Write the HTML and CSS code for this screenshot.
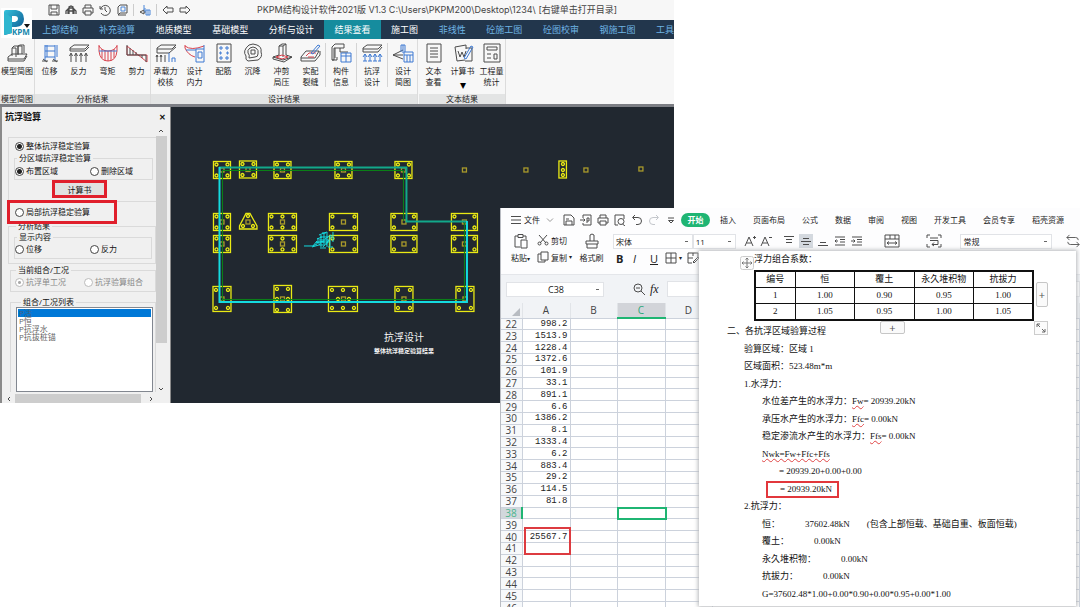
FILE: index.html
```html
<!DOCTYPE html>
<html lang="zh-CN">
<head>
<meta charset="utf-8">
<title>PKPM结构设计软件</title>
<link rel="stylesheet" href="styles.css">
</head>
<body>
<main class="desktop">

<section class="pkpm">
  <header class="pkpm-head">
    <svg class="logo" viewBox="0 0 32 32">
      <defs><linearGradient id="lg" x1="0" y1="0" x2="1" y2="1"><stop offset="0" stop-color="#35c3dc"/><stop offset="1" stop-color="#0b4f8c"/></linearGradient></defs>
      <rect x="1" y="1" width="31" height="30" fill="#fff"/>
      <path d="M4 5Q4 3 6 3H16Q24 4 24 12Q24 19 16 20H12V26L5 28Q4 28 4 26ZM12 9V15H15Q18 14 18 12Q18 9 15 9Z" fill="url(#lg)" fill-rule="evenodd"/>
      <path d="M4 5L12 11V26L4 28Z" fill="#2fb6cf"/>
      <text x="12" y="28" class="logo-text">KPM</text>
      <path d="M24 17h6l-3 4z" fill="#111"/>
    </svg>
    <div class="titlebar">
      <div class="quick">
        <svg viewBox="0 0 12 12"><path d="M1 1h10v10H1zM3 1v4h6V1M3 11V8h6v3"/></svg>
        <svg viewBox="0 0 12 12"><path d="M1 10V7l2-2v5M4 10V3l2-1 2 1v7M9 10V5l2 2v3M3 7h6M4 4h4" stroke-width="1.3"/></svg>
        <svg viewBox="0 0 12 12"><path d="M3 4V1h6v3M3 9H1V4h10v5H9M3 7h6v4H3z"/></svg>
        <svg viewBox="0 0 12 12"><path d="M1 2v3h3M1.500 5A5 5 0 1 1 2 9M6 3v3l2 2"/></svg>
        <svg viewBox="0 0 12 12"><path d="M2 10V3l2-2h7v8H4L2 11h8"/><path d="M5 3h4v4H5z" stroke="#4a86d8"/></svg>
        <i class="sep"></i>
        <svg viewBox="0 0 12 12"><path d="M1 8l4-2v4zM5 8h2" /><path d="M5 1v5M6 4v4M7 6h4v5H7zM9 6v5" stroke="#4a86d8"/></svg>
        <i class="sep"></i>
        <svg viewBox="0 0 12 12"><path d="M1 6l4-4v2h6v4H5v2z"/></svg>
        <svg viewBox="0 0 12 12"><path d="M11 6L7 2v2H1v4h6v2z"/></svg>
      </div>
      <h1>PKPM结构设计软件2021版 V1.3 C:\Users\PKPM200\Desktop\1234\ [右键单击打开目录]</h1>
    </div>
    <nav class="tabs">
      <button class="dim">上部结构</button><button class="dim">补充验算</button><button>地质模型</button><button>基础模型</button><button>分析与设计</button><button class="active">结果查看</button><button>施工图</button><button class="dim">非线性</button><button class="dim">砼施工图</button><button class="dim">砼图校审</button><button class="dim">钢施工图</button><button class="dim last">工具</button>
    </nav>
  </header>

  <div class="ribbon">
    <div class="group first"><div class="tools">
      <button><svg viewBox="0 0 24 20"><path d="M3 14l4-3h15l-3 5H3zM3 16v2h16l3-5M7 13V5h4v9M13 12V3h4v8M7 5l2-2h4v8M13 3l2-1h4v8"/></svg>模型简图</button>
    </div><div class="caption">模型简图</div></div>
    <div class="group"><div class="tools">
      <button><svg viewBox="0 0 24 20"><g class="b"><path d="M7 2v16M17 2v16M7 3h10M7 8h10M7 14h10M9 2v12M19 2v12"/></g><path d="M4 18h6M14 18h6M5 16l4 3M15 16l4 3"/></svg>位移</button>
      <button><svg viewBox="0 0 24 20"><path d="M3 5l4-3h15l-4 4H3zM3 6v2h15l4-4M4 19v-8M9 19v-8M14 19v-8M19 19v-8M2.500 13L4 10l1.500 3M7.500 13L9 10l1.500 3M12.500 13L14 10l1.500 3M17.500 13L19 10l1.500 3"/></svg>反力</button>
      <button><svg viewBox="0 0 24 20"><g class="r"><path d="M3 2v6Q4 18 12 18Q20 18 21 8V2M3 3Q6 8 12 8T21 3M6 6v9M9 7v11M12 8v10M15 7v11M18 6v9"/></g><path class="b" d="M3 8h18"/></svg>弯矩</button>
      <button><svg viewBox="0 0 24 20"><path d="M2 3l20 16v-7H2z" class="r"/><path d="M2 2v10h19v7M5 5v7M8 7v5M11 9v3M14 12v1M17 12v3"/></svg>剪力</button>
    </div><div class="caption">分析结果</div></div>
    <div class="group"><div class="tools">
      <button><svg viewBox="0 0 24 20"><path d="M3 5l4-3h15l-4 4H3zM3 6v4h12l7-6M3 19v-7M7 19v-7M11 19v-7M2 14l1-2 1 2M6 14l1-2 1 2"/><path class="b" d="M15 10v9M18 19v-4h3v4"/></svg>承载力<br>校核</button>
      <button><svg viewBox="0 0 24 20"><path class="r" d="M2 2v3Q5 12 12 14M2 3Q8 8 21 3"/><path class="b" d="M3 7h10M13 6h8v13h-8zM15 9h4v6h-4zM21 2v4"/></svg>设计<br>内力</button>
      <button><svg viewBox="0 0 24 20"><path d="M5 1h14v18H5z"/><path class="b" d="M8 4h2v2H8zM14 4h2v2h-2zM8 14h2v2H8zM14 14h2v2h-2zM8 9h1v2H8zM15 9h1v2h-1z"/></svg>配筋</button>
      <button><svg viewBox="0 0 24 20"><path d="M8 2Q12 0 16 2Q21 4 20 9Q22 14 17 17L7 18Q4 17 5 13Q1 8 8 2ZM9 5Q12 3 15 5Q18 7 17 11Q17 14 14 14L8 15Q9 12 7 10Q6 7 9 5ZM10 7h4v4h-4z"/></svg>沉降</button>
      <button><svg viewBox="0 0 24 20"><path d="M9 13V3l3-2h4v11M9 3h4v11M13 3l3-2M3 14l6-2M16 12l6 2-8 5-11-3v-2l10 3 9-3"/><path class="r" d="M6 14l6-2 6 2-6 2z"/></svg>冲剪<br>局压</button>
      <button><svg viewBox="0 0 24 20"><path d="M2 14l5-6h13l-4 7H2zM2 15v3h14l5-6V8"/><path class="r" d="M7 13l3-3h7M9 14h6"/><path class="b" d="M12 10l7-8 2 1-7 8z"/></svg>实配<br>裂缝</button>
      <button class="wide"><svg viewBox="0 0 24 20"><path d="M3 4l3-3h9v4H5v12H3zM6 5v10M11 5v4h8M3 17h5v-3"/><path class="b" d="M12 10h10v9H12zM12 13h10M17 10v9"/></svg>构件<br>信息</button>
      <button class="wide"><svg viewBox="0 0 24 20"><path d="M3 5l4-3h15l-4 4H3zM3 6v3h15l4-5"/><path class="b" d="M5 18v-7M10 18v-7M15 18v-7M20 18v-7M3 14l2-3 2 3M8 14l2-3 2 3M13 14l2-3 2 3M18 14l2-3 2 3M3 18h4M8 18h4M13 18h4M18 18h3"/></svg>抗浮<br>设计</button>
      <button class="wide"><svg viewBox="0 0 24 20"><path d="M12 7L2 12l10 4M2 12h10"/><path class="b" d="M10 9V2h4v7M12 2v8M13 9h9v10h-9zM13 12h9M16 12v7M19 12v7"/></svg>设计<br>简图</button>
    </div><div class="caption">设计结果</div></div>
    <div class="group"><div class="tools">
      <button><svg viewBox="0 0 24 20"><path d="M5 1h14v18H5zM8 5h8M8 8h8M8 11h8M8 14h8"/></svg>文本<br>查看</button>
      <button><svg viewBox="0 0 24 20"><path d="M4 4l11-2v4M4 4l2 14 8-1M15 5h6v13h-7M7 8l2 6 2-5 2 5 2-6" /><path class="b" d="M13 15l7-12 2 1-7 12z"/></svg>计算书<span class="arrow">▾</span></button>
      <button><svg viewBox="0 0 24 20"><path d="M4 1h16v18H4zM7 4h10v3H7zM7 11h4M7 15h4M14 11h3v5h-3z"/></svg>工程量<br>统计</button>
    </div><div class="caption">文本结果</div></div>
  </div>

  <div class="work">
    <aside class="panel">
      <h2>抗浮验算 <button aria-label="关闭">✕</button></h2>
      <div class="scroller">
        <form class="form">
          <div class="box main-box">
            <label><input type="radio" name="mode" checked>整体抗浮稳定验算</label>
            <fieldset><legend>分区域抗浮稳定验算</legend>
              <div class="pair"><label><input type="radio" name="area" checked>布置区域</label><label><input type="radio" name="area">删除区域</label></div>
            </fieldset>
            <div class="mark calc"><button type="button">计算书</button></div>
          </div>
          <div class="mark local"><label><input type="radio" name="mode">局部抗浮稳定验算</label></div>
          <fieldset class="results"><legend>分析结果</legend>
            <fieldset><legend>显示内容</legend>
              <div class="pair"><label><input type="radio" name="show">位移</label><label><input type="radio" name="show">反力</label></div>
            </fieldset>
          </fieldset>
          <fieldset class="combo"><legend>当前组合/工况</legend>
            <div class="pair off"><label><input type="radio" name="c" disabled checked>抗浮单工况</label><label><input type="radio" name="c" disabled>抗浮验算组合</label></div>
          </fieldset>
          <fieldset class="list"><legend>组合/工况列表</legend>
            <ul role="listbox"><li class="sel" role="option" aria-selected="true">P活</li><li role="option">P恒</li><li role="option">P抗浮水</li><li role="option">P抗拔桩锚</li></ul>
          </fieldset>
        </form>
        <div class="vbar"><svg viewBox="0 0 10 10"><path d="M3 6l2-2 2 2"/></svg><i></i><svg viewBox="0 0 10 10"><path d="M3 4l2 2 2-2"/></svg></div>
        <div class="hbar"><svg viewBox="0 0 10 10"><path d="M6 3L4 5l2 2"/></svg><i></i><svg viewBox="0 0 10 10"><path d="M4 3l2 2-2 2"/></svg></div>
      </div>
    </aside>
    <svg class="cad" viewBox="171 107 503 296" preserveAspectRatio="xMinYMin meet">
      <defs>
        <g id="c"><circle r="1.500"/></g>
        <g id="k"><rect x="-2" y="-2" width="4" height="4" class="core"/></g>
        <g id="s"><rect x="-8.500" y="-8.500" width="17" height="17"/><use href="#c" x="-5.500" y="-5.500"/><use href="#c" x="5.500" y="-5.500"/><use href="#c" x="-5.500" y="5.500"/><use href="#c" x="5.500" y="5.500"/><use href="#k"/></g>
        <g id="m"><rect x="-13" y="-8.500" width="26" height="17"/><use href="#c" x="-10" y="-5.500"/><use href="#c" x="10" y="-5.500"/><use href="#c" x="-10" y="5.500"/><use href="#c" x="10" y="5.500"/><use href="#k"/></g>
        <g id="w"><rect x="-14" y="-8.500" width="28" height="17"/><use href="#c" x="-11" y="-5.500"/><use href="#c" x="11" y="-5.500"/><use href="#c" x="-11" y="5.500"/><use href="#c" x="11" y="5.500"/><use href="#k"/></g>
        <g id="v"><rect x="-9" y="-12.500" width="18" height="25"/><use href="#c" x="-6" y="-9"/><use href="#c" x="6" y="-9"/><use href="#c" x="-6" y="9"/><use href="#c" x="6" y="9"/><use href="#k"/></g>
      </defs>
      <g class="piles">
        <use href="#s" x="222" y="170"/><use href="#s" x="248" y="169.500"/><use href="#s" x="282.500" y="170"/><use href="#s" x="343.500" y="170"/><use href="#s" x="403.500" y="170"/>
        <use href="#s" x="222" y="222"/><use href="#w" x="282.500" y="222"/><use href="#c" x="282.500" y="216.500"/><use href="#c" x="282.500" y="227.500"/><use href="#w" x="343.500" y="222"/><use href="#m" x="404" y="222"/><use href="#m" x="464.500" y="222"/>
        <path d="M246 213.500h4L257 226v3h-17.500v-3z"/><use href="#c" x="248" y="216"/><use href="#c" x="243" y="226"/><use href="#c" x="253" y="226"/><use href="#k" x="248" y="222"/>
        <use href="#s" x="222" y="244"/><use href="#w" x="282.500" y="244"/><use href="#c" x="282.500" y="238.500"/><use href="#c" x="282.500" y="249.500"/><use href="#w" x="343.500" y="244"/><use href="#m" x="404" y="244"/><use href="#m" x="464.500" y="244"/>
        <use href="#v" x="222" y="299"/><rect x="274" y="285.500" width="17.500" height="27"/><use href="#c" x="277" y="289"/><use href="#c" x="288" y="289"/><use href="#c" x="277" y="299"/><use href="#c" x="288" y="299"/><use href="#c" x="277" y="310"/><use href="#c" x="288" y="310"/><use href="#k" x="282.500" y="299"/>
        <rect x="328.500" y="286.500" width="29" height="25"/><use href="#c" x="332" y="290"/><use href="#c" x="343" y="290"/><use href="#c" x="354" y="290"/><use href="#c" x="338" y="299"/><use href="#c" x="349" y="299"/><use href="#c" x="332" y="308"/><use href="#c" x="343" y="308"/><use href="#c" x="354" y="308"/><use href="#k" x="343.500" y="299"/>
        <use href="#v" x="404" y="299"/><use href="#v" x="465" y="299"/>
        <use href="#k" x="464.500" y="170"/><use href="#k" x="526" y="170"/><use href="#k" x="586" y="170"/><use href="#k" x="641" y="169"/>
        <rect x="559" y="161" width="7.500" height="17"/><use href="#c" x="563" y="164"/><use href="#c" x="563" y="170"/><use href="#c" x="563" y="175"/>
      </g>
      <path class="green" d="M222.500 302V170.500H403.500V221M464.500 222V299.500H222"/>
      <path class="teal" d="M219 167.500H406.500V221.500H467"/>
      <path class="cyan" d="M219.500 167V302H467V221"/>
      <path class="cyan scribble" d="M304 246h9l4-2M312 247l7-2 3-4M316 243l8-2M317 239l5-2M319 235l8-3M320 237h8M322 233h6M325 239l6-4M316 242h8M319 245h6M322 242h7M326 245l3-5M330 237v9M333 232v10M328 247h5M331 235v3M320 248h6M313 246l4-5M318 238v6M321 235v12M324 233v11M327 234v13M319 240h10M323 247l6-7"/>
      <text x="404" y="341" class="cad-title">抗浮设计</text>
      <text x="404" y="353" class="cad-sub">整体抗浮稳定验算结果</text>
    </svg>
  </div>
</section>

<section class="sheet">
  <nav class="menu">
    <button class="file"><svg viewBox="0 0 12 12"><path d="M1 2.500h10M1 6h10M1 9.500h10"/></svg>文件<svg class="chev" viewBox="0 0 12 12"><path d="M3 4.500l3 3 3-3"/></svg></button>
    <div class="icons">
      <svg viewBox="0 0 12 12"><path d="M1 1h7l3 3v7H1zM3 11V7h6v4M3 5h3"/></svg>
      <svg viewBox="0 0 12 12"><path d="M3 4V1h8v10H3V9M0 6h5M3.500 4.500L5 6 3.500 7.500M7 9V4h2v3H7"/></svg>
      <svg viewBox="0 0 12 12"><path d="M3 4V1h6v3M3 9H1V4h10v5H9M3 7h6v4H3z"/></svg>
      <svg viewBox="0 0 12 12"><path d="M4 11H1V1h9v4M8.500 10L11 12"/><circle cx="7" cy="7.500" r="3"/></svg>
      <svg viewBox="0 0 12 12"><path d="M4 1L1.500 3.500 4 6M2 3.500h5a3.500 3.500 0 0 1 0 7H5"/></svg>
      <svg viewBox="0 0 12 12" class="faint"><path d="M8 1l2.500 2.500L8 6M10 3.500H5a3.500 3.500 0 0 0 0 7h2"/></svg>
      <svg viewBox="0 0 12 12"><path d="M3 4h6M3.500 6.500h5L6 9z"/></svg>
    </div>
    <div class="menu-tabs"><button class="on">开始</button><button>插入</button><button>页面布局</button><button>公式</button><button>数据</button><button>审阅</button><button>视图</button><button>开发工具</button><button>会员专享</button><button>稻壳资源</button></div>
  </nav>
  <div class="toolbar">
    <button class="big"><svg viewBox="0 0 16 16"><path d="M5 3H2v11h5M10 3h3v3M5 1.500h5v3H5zM8 7h6v8H8z"/></svg><span>粘贴<small>▾</small></span></button>
    <div class="stack">
      <button><svg viewBox="0 0 12 12"><path d="M2 1l7 8M10 1L3 9"/><circle cx="2.500" cy="9.500" r="1.500"/><circle cx="9.500" cy="9.500" r="1.500"/></svg>剪切</button>
      <button><svg viewBox="0 0 12 12"><path d="M4 1h7v8H4zM4 3H1v8h7V9"/></svg>复制<small>▾</small></button>
    </div>
    <button class="big"><svg viewBox="0 0 16 16"><path d="M6 8V2q2-2 4 0v6M2 8h12v3H2zM3 11v4h10v-4"/></svg><span>格式刷</span></button>
    <div class="stack font">
      <div class="line">
        <select class="face" aria-label="字体"><option>宋体</option></select><select class="size" aria-label="字号"><option>11</option></select>
        <div class="aa"><svg viewBox="0 0 12 12"><path d="M1 11L5 2l4 9M2.500 8h5M9 2.500h3M10.500 1v3"/></svg><svg viewBox="0 0 12 12"><path d="M1 11L5 2l4 9M2.500 8h5M9 2.500h3"/></svg></div>
        <div class="align">
          <svg viewBox="0 0 12 12"><path d="M1 1.500h10M3 4.500h6M3 7.500h6"/></svg>
          <svg class="pressed" viewBox="0 0 12 12"><path d="M3 3.500h6M1 6.500h10M3 9.500h6"/></svg>
          <svg viewBox="0 0 12 12"><path d="M3 7.500h6M1 10.500h10"/></svg>
          <svg viewBox="0 0 12 12"><path d="M1 2h10M6 4.500h5M6 7h5M1 10h10M4 6H1M2.500 4.500L1 6l1.500 1.500"/></svg>
          <svg viewBox="0 0 12 12"><path d="M1 2h10M6 4.500h5M6 7h5M1 10h10M0 6h3.500M2.500 4.500L4 6 2.500 7.500"/></svg>
        </div>
        <svg class="ic" viewBox="0 0 16 16"><path d="M1 2h14v12H1zM1 6h14M6 2v4M11 2v4M3 10h10M5 8.500L3 10l2 1.500M11 8.500l2 1.500-2 1.500"/></svg>
        <svg class="ic wrap" viewBox="0 0 16 16"><path d="M4 2H1v3M12 2h3v3M1 11v3h3M15 11v3h-3M4 5h8M4 7.500h8v4H6M8 9.500l-2 2L8 13"/></svg>
        <select class="fmt" aria-label="数字格式"><option>常规</option></select>
        <svg class="ic loop" viewBox="0 0 16 16"><path d="M4 1L1 4l3 3M1 4h10q3 0 3 3M12 9l3 3-3 3M15 12H5q-3 0-3-3"/></svg>
      </div>
      <div class="line fmtline">
        <button><b>B</b></button><button><i>I</i></button><button><u>U</u></button>
        <button class="borders"><svg viewBox="0 0 12 12"><path d="M1 1h10v10H1zM6 1v10M1 6h10"/></svg><small>▾</small></button>
        <svg viewBox="0 0 12 12"><path d="M11 5V1H1v10h4M1 6h5M6 1v3M6 10l5-5 1 1-5 5z"/></svg>
      </div>
    </div>
  </div>
  <div class="formula">
    <select aria-label="名称框"><option>C38</option></select>
    <svg viewBox="0 0 12 12"><circle cx="5" cy="5" r="4"/><path d="M8 8l4 4M3 5h4"/></svg>
    <span class="fx">fx</span>
    <input type="text" aria-label="编辑栏">
  </div>
  <div class="grid">
    <table>
      <colgroup><col class="c0"><col class="c48"><col class="c47"><col class="c48"><col class="c47"><col></colgroup>
      <thead><tr><th><svg viewBox="0 0 8 8"><path d="M8 0v8H0z"/></svg></th><th>A</th><th>B</th><th class="hot">C</th><th>D</th><th></th></tr></thead>
      <tbody>
        <tr><th>22</th><td>998.2</td><td></td><td></td><td></td><td></td></tr>
        <tr><th>23</th><td>1513.9</td><td></td><td></td><td></td><td></td></tr>
        <tr><th>24</th><td>1228.4</td><td></td><td></td><td></td><td></td></tr>
        <tr><th>25</th><td>1372.6</td><td></td><td></td><td></td><td></td></tr>
        <tr><th>26</th><td>101.9</td><td></td><td></td><td></td><td></td></tr>
        <tr><th>27</th><td>33.1</td><td></td><td></td><td></td><td></td></tr>
        <tr><th>28</th><td>891.1</td><td></td><td></td><td></td><td></td></tr>
        <tr><th>29</th><td>6.6</td><td></td><td></td><td></td><td></td></tr>
        <tr><th>30</th><td>1386.2</td><td></td><td></td><td></td><td></td></tr>
        <tr><th>31</th><td>8.1</td><td></td><td></td><td></td><td></td></tr>
        <tr><th>32</th><td>1333.4</td><td></td><td></td><td></td><td></td></tr>
        <tr><th>33</th><td>6.2</td><td></td><td></td><td></td><td></td></tr>
        <tr><th>34</th><td>883.4</td><td></td><td></td><td></td><td></td></tr>
        <tr><th>35</th><td>29.2</td><td></td><td></td><td></td><td></td></tr>
        <tr><th>36</th><td>114.5</td><td></td><td></td><td></td><td></td></tr>
        <tr><th>37</th><td>81.8</td><td></td><td></td><td></td><td></td></tr>
        <tr><th class="hotrow">38</th><td></td><td></td><td class="cursor"></td><td></td><td></td></tr>
        <tr><th>39</th><td></td><td></td><td></td><td></td><td></td></tr>
        <tr><th>40</th><td class="total">25567.7</td><td></td><td></td><td></td><td></td></tr>
        <tr><th>41</th><td></td><td></td><td></td><td></td><td></td></tr>
        <tr><th>42</th><td></td><td></td><td></td><td></td><td></td></tr>
        <tr><th>43</th><td></td><td></td><td></td><td></td><td></td></tr>
        <tr><th>44</th><td></td><td></td><td></td><td></td><td></td></tr>
        <tr><th>45</th><td></td><td></td><td></td><td></td><td></td></tr>
        <tr><th>46</th><td></td><td></td><td></td><td></td><td></td></tr>
      </tbody>
    </table>
  </div>

  <article class="doc">
    <div class="lead"><svg viewBox="0 0 14 14"><rect x=".5" y=".5" width="13" height="13" rx="2"/><path d="M7 2v10M2 7h10M5.500 3.500L7 2l1.500 1.500M5.500 10.500L7 12l1.500-1.500M3.500 5.500L2 7l1.500 1.500M10.500 5.500L12 7l-1.500 1.500"/></svg><span>浮力组合系数：</span></div>
    <div class="table-wrap">
      <table>
        <colgroup><col class="c40"><col><col><col><col></colgroup>
        <tr><th>编号</th><th>恒</th><th>覆土</th><th>永久堆积物</th><th>抗拔力</th></tr>
        <tr><td>1</td><td>1.00</td><td>0.90</td><td>0.95</td><td>1.00</td></tr>
        <tr><td>2</td><td>1.05</td><td>0.95</td><td>1.00</td><td>1.05</td></tr>
      </table>
      <button class="add-col">+</button>
      <button class="add-row">+</button>
      <svg class="expand" viewBox="0 0 14 14"><rect x=".5" y=".5" width="13" height="13"/><path d="M3 6V3h3M3 3l3 3M11 8v3H8M11 11L8 8"/></svg>
    </div>
    <div class="text">
      <p>二、各抗浮区域验算过程</p>
      <p class="i1">验算区域：区域 1</p>
      <p class="i1">区域面积：523.48m*m</p>
      <p class="i1">1.水浮力：</p>
      <p class="i2">水位差产生的水浮力：<u>Fw</u>= 20939.20kN</p>
      <p class="i2">承压水产生的水浮力：<u>Ffc</u>= 0.00kN</p>
      <p class="i2">稳定渗流水产生的水浮力：<u>Ffs</u>= 0.00kN</p>
      <p class="i2"><u>Nwk=Fw+Ffc+Ffs</u></p>
      <p class="i3">= 20939.20+0.00+0.00</p>
      <p class="i2"><span class="boxed">= 20939.20kN</span></p>
      <p class="i1">2.抗浮力：</p>
      <p class="i2 cols"><span>恒：</span><span>37602.48kN</span><span class="note">(包含上部恒载、基础自重、板面恒载)</span></p>
      <p class="i2 cols"><span>覆土：</span><span>0.00kN</span></p>
      <p class="i2 cols"><span>永久堆积物：</span><span>0.00kN</span></p>
      <p class="i2 cols"><span>抗拔力：</span><span>0.00kN</span></p>
      <p class="i2">G=37602.48*1.00+0.00*0.90+0.00*0.95+0.00*1.00</p>
    </div>
  </article>
</section>
</main>
</body>
</html>
```
FILE: styles.css
```css
* { box-sizing: border-box; }
body { margin: 0; background: #fff; color: #222; font: 8px/11px "Open Sans", "Noto Sans CJK SC", sans-serif; }
button, input, select { font: inherit; color: inherit; border: 0; padding: 0; margin: 0; background: none; }
svg { fill: none; stroke: #4c4c4c; stroke-width: 1; display: block; flex: none; }
h1, h2, p, ul { margin: 0; padding: 0; font-weight: normal; }
.desktop { position: relative; min-height: 100vh; overflow: hidden; }

/* PKPM window */
.pkpm { width: 62.4%; background: #f7f7f7; }
.pkpm-head { display: grid; grid-template-columns: 32px minmax(0, 1fr); grid-template-rows: 20px 19px; }
.logo { grid-row: 1 / 3; width: 32px; height: 32px; margin-top: 7px; stroke: none; }
.logo-text { font: bold 8px "Open Sans", sans-serif; fill: #1687ad; }
.titlebar { display: flex; align-items: center; padding-left: 16px; gap: 66px; }
.quick { display: flex; align-items: center; gap: 5px; }
.quick svg { width: 12px; height: 12px; }
.quick .sep { width: 1px; height: 12px; background: #ccc; }
.titlebar h1 { font: 9px/20px Inter, "Noto Sans CJK SC", sans-serif; white-space: nowrap; color: #444; }
.tabs { display: flex; background: #22364c; overflow: hidden; }
.tabs button { flex: 1 0 auto; padding: 0 10px; font-size: 9px; color: #fff; white-space: nowrap; }
.tabs .dim { color: #6fb4e4; }
.tabs .active { background: #168c9e; }
.tabs .last { flex: none; padding-right: 0; }

.ribbon { display: flex; border-bottom: 3px solid #7c7e84; }
.group { border-right: 1px solid #dcdcdc; }
.tools { display: flex; height: 55px; padding-top: 4px; }
.tools button { width: 29px; display: block; text-align: center; line-height: 11px; white-space: nowrap; align-self: start; }
.first .tools button { width: 34px; }
.group:nth-child(4) { margin-left: 1px; }
.tools .wide { width: 31px; border-left: 1px solid #d4d4d4; }
.tools svg { width: 24px; height: 20px; margin: 0 auto 2px; }
.tools .b { stroke: #3d79d2; }
.tools .r { stroke: #d8434e; }
.arrow { display: block; font-size: 12px; line-height: 18px; color: #000; }
.caption { background: #e3e4e4; text-align: center; line-height: 10px; height: 10px; }
.group:nth-child(2) .tools, .group:nth-child(3) .tools, .group:nth-child(4) .tools { margin-right: -1px; }

.work { display: grid; grid-template-columns: 171px minmax(0, 1fr); }
.panel { background: #f0f0f0; border-left: 2px solid #8a8a8a; border-right: 1px solid #8a8a8a; color: #111; }
.panel h2 { display: flex; justify-content: space-between; padding: 0 3px; font-size: 9px; line-height: 19px; font-weight: bold; }
.panel h2 button { font-size: 8px; width: 9px; }
.scroller { display: grid; grid-template-columns: 154px 11px; grid-template-rows: 268px 9px; }
.form { padding: 11px 0 0 6px; line-height: 10px; }
.form fieldset { border: 1px solid #dadada; margin: 0; padding: 0; min-width: 0; }
.form legend { padding: 0 2px; margin-left: 2px; line-height: 10px; }
.form label { display: flex; align-items: center; gap: 2px; height: 10px; white-space: nowrap; }
.form input { appearance: none; width: 9px; height: 9px; border: 1px solid #444; border-radius: 50%; background: #fff; }
.form input:checked { background: radial-gradient(#222 0 2px, #fff 3px); }
.form input:disabled { border-color: #bbb; }
.form input:disabled:checked { background: radial-gradient(#aaa 0 1px, #fff 2px); }
.pair { display: grid; grid-template-columns: 75px 1fr; }
.off { color: #888; grid-template-columns: 69px 1fr; }
.box { border: 1px solid #dadada; border-right: 0; height: 65px; padding: 3px 3px 0 6px; }
.box fieldset, .results fieldset { height: 27px; }
.box fieldset { margin: 2px 0 0 -1px; }
.box .pair { padding-top: 3px; }
.mark { border: 3px solid #e01f2c; }
.calc { width: 55px; height: 18px; margin: 0 0 0 37px; }
.calc button { display: block; width: 100%; height: 12px; padding-top: 2px; line-height: 10px; background: #e1e1e1; }
.local { position: relative; width: 110px; height: 24px; margin: -2px 0 0 -1px; padding: 4px 0 0 5px; }
.form .results { height: 43px; margin-top: -3px; padding: 1px 3px 0 5px; }
.results .pair { padding-top: 2px; }
.form .combo { height: 27px; margin: 1px 0 0 2px; }
.combo legend, .list legend { margin-left: 5px; }
.combo .pair { padding: 2px 0 0 4px; }
.form .list { margin: 5px 0 0 2px; border-bottom: 0; padding: 0 2px 0 5px; }
.list ul { list-style: none; height: 85px; border: 1px solid #828790; background: #fff; color: #666; line-height: 8px; padding: 1px; }
.list li { padding: 0 1px; height: 8px; }
.list .sel { background: #0078d7; color: #47627c; }
.vbar { grid-row: 1 / 3; grid-column: 2; display: flex; flex-direction: column; }
.vbar i { height: 207px; background: #cdcdcd; margin-bottom: 41px; }
.vbar svg, .hbar svg { width: 10px; height: 10px; }
.hbar { display: flex; align-items: center; grid-row: 2; grid-column: 1; padding-left: 2px; height: 9px; }
.hbar i { width: 126px; height: 9px; background: #cdcdcd; margin: 0 5px 0 1px; }

.cad { width: 100%; height: 100%; background: #212830; }
.piles { stroke: #eaea14; stroke-width: 1.3; }
.core { stroke: #a99a2b; }
.green { stroke: #0b8217; }
.teal { stroke: #12a88a; stroke-width: 2; }
.cyan { stroke: #14dbe0; stroke-width: 2; }
.scribble { stroke-width: 1; }
.cad-title, .cad-sub { fill: #f4f4f4; stroke: none; text-anchor: middle; font-family: "Noto Sans CJK SC", sans-serif; font-size: 10px; }
.cad-sub { font-size: 6px; font-weight: bold; }

/* Spreadsheet window */
.sheet { position: absolute; left: 500px; right: 0; top: 208px; bottom: 0; background: #fdfdfe; border-left: 1px solid #b9bcc2; display: flex; flex-direction: column; overflow: hidden; }
.sheet small { font-size: 6px; }
.menu { display: flex; align-items: center; height: 23px; padding-left: 9px; }
.file { display: flex; align-items: center; gap: 2px; width: 53px; }
.menu svg, .stack svg { width: 12px; height: 12px; }
.file .chev { stroke: #999; margin-left: 2px; }
.icons { display: flex; gap: 5px; width: 118px; }
.icons svg { width: 12px; }
.icons .faint { stroke: #c4c7cc; }
.menu-tabs { display: flex; align-items: center; gap: 17px; white-space: nowrap; }
.menu-tabs .on { width: 29px; height: 14px; border-radius: 7px; background: #1fb573; color: #fff; font-weight: bold; margin-right: -7px; }
.toolbar { display: flex; height: 44px; padding-left: 8px; border-bottom: 1px solid #e4e6ea; }
.big { width: 23px; height: 36px; margin-top: 2px; display: flex; flex-direction: column; align-items: center; gap: 3px; white-space: nowrap; }
.big svg { width: 16px; height: 16px; }
.stack { display: flex; flex-direction: column; gap: 5px; margin: 3px 4px 0 5px; }
.stack button { display: flex; align-items: center; gap: 2px; height: 12px; }
.stack:nth-child(2) { width: 39px; }
.font { flex: 1; margin: 2px 0 0 10px; min-width: 0; gap: 3px; }
.line { display: flex; align-items: center; height: 16px; }
.line select, .formula select { appearance: none; background: linear-gradient(#666, #666) right 4px center / 3px 1px no-repeat #fff; border: 1px solid #e1e3e7; height: 15px; padding-left: 2px; }
.line .face { width: 80px; }
.line .size { width: 44px; }
.line .fmt { width: 92px; margin-left: 18px; }
.aa { display: flex; gap: 4px; margin: 0 11px 0 8px; }
.align { display: flex; gap: 5px; }
.align .pressed { background: #d4d9df; outline: 1px solid #d4d9df; }
.ic.ic { width: 16px; height: 16px; margin-left: 21px; }
.ic.wrap { margin-left: 26px; }
.ic.loop { margin-left: 14px; width: 14px; }
.fmtline { gap: 9px; padding-left: 3px; font-size: 11px; height: 12px; }
.fmtline button { min-width: 8px; }
.fmtline .borders { margin: 0 -4px 0 -2px; }
.formula { display: flex; align-items: center; height: 28px; background: #f1f3f6; padding-left: 5px; }
.formula select { width: 98px; background-color: #fff; text-align: center; text-align-last: center; font-size: 9px; }
.formula svg { width: 12px; height: 12px; margin-left: 29px; }
.fx { font: italic 12px "Liberation Serif", serif; margin: 0 5px; width: 12px; }
.formula input { flex: 1; height: 16px; background: #fff; border: 1px solid #e1e3e7; min-width: 0; }
.grid { flex: 1; min-height: 0; overflow: hidden; }
.grid table { width: 100%; height: 311px; table-layout: fixed; border-collapse: collapse; background: #fff; }
.grid th, .grid td { padding: 0; border: 1px solid #ccd2dc; border-width: 0 1px 1px 0; line-height: 10px; }
.grid tbody th { font: 10px/10px "Open Sans", sans-serif; color: #444; background: #f7f9fb; }
.grid thead th { height: 15px; background: #f1f3f6; font: 10px/14px "Open Sans", sans-serif; color: #444; border-right-color: #e1e4e8; }
.grid thead .hot { background: #d2d4d9; color: #2ba77a; border-bottom: 2px solid #1fb573; }
.grid tbody .hotrow { background: #d2d8dc; color: #4ab58d; border-right: 2px solid #1fb573; }
.grid td { font-family: "Liberation Mono", monospace; font-size: 9px; text-align: right; padding-right: 2px; position: relative; }
.grid th svg { width: 8px; height: 8px; fill: #b8bcc2; stroke: none; margin: 3px 0 0 11px; }
.c0 { width: 21px; } .c48 { width: 48px; } .c47 { width: 47px; }
.cursor::after { content: ""; position: absolute; inset: -1px -2px -2px -1px; border: 2px solid #1fb573; }
.total::after { content: ""; position: absolute; inset: -4px -1px -13px 1px; border: 2px solid #dd3b40; }

/* Document window */
.doc { position: absolute; left: 198px; right: 4px; top: 43px; bottom: 1px; background: #fff; box-shadow: 0 0 4px 1px #b5b7ba; display: flex; flex-direction: column; font: 9px/16px "Liberation Serif", "Noto Sans CJK SC", serif; color: #111; }
.lead { display: flex; align-items: start; height: 19px; padding-left: 41px; }
.lead svg { width: 14px; height: 14px; margin-top: 5px; stroke: #777; }
.lead rect, .expand rect { stroke: #ccc; fill: #fbfbfb; }
.table-wrap { position: relative; margin: 0 42px 0 55px; }
.table-wrap table { width: 100%; table-layout: fixed; border-collapse: collapse; border: 2px solid #111; text-align: center; }
.table-wrap th, .table-wrap td { border: 1px solid #111; height: 16px; line-height: 15px; padding: 0; font-weight: normal; }
.c40 { width: 40px; }
.add-col, .add-row { position: absolute; border: 1px solid #c6c6c6; border-radius: 2px; background: #fafafa; color: #555; font: 11px/10px "Open Sans", sans-serif; }
.add-col { left: calc(100% + 2px); top: 12px; width: 12px; height: 25px; }
.add-row { top: 100%; left: 45%; width: 25px; height: 13px; }
.expand { position: absolute; top: 100%; left: 100%; width: 14px; height: 14px; stroke: #666; }
.text { flex: 1; min-height: 0; display: grid; grid-auto-rows: 1fr; padding: 2px 0 3px 28px; white-space: nowrap; }
.text p { line-height: 16px; }
.i1 { padding-left: 17px; }
.i2 { padding-left: 35px; }
.i3 { padding-left: 52px; }
.text u { text-decoration: underline wavy #e04545 1px; }
.cols { display: flex; gap: 25px; }
.cols .note { margin-left: -8px; }
.boxed { display: inline-block; border: 2px solid #e2373c; line-height: 13px; padding: 0 5px 0 12px; margin-left: 4px; }
```
